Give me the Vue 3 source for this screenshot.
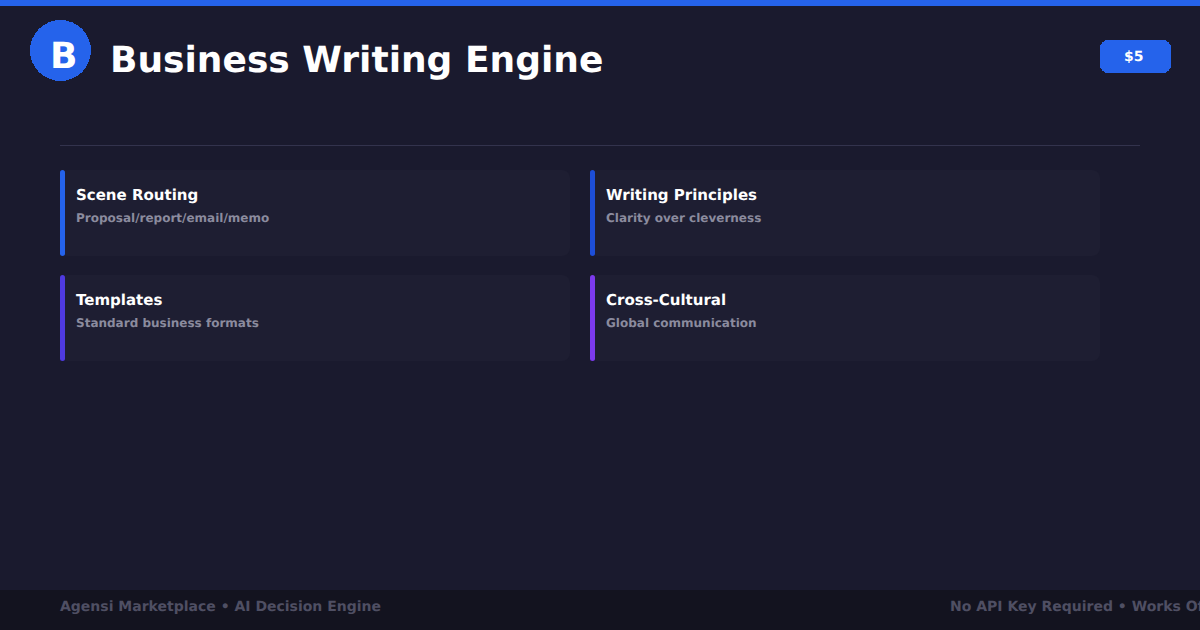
<template>
  <div class="page">
    <div class="topbar"></div>

    <header class="header">
      <svg class="logo" width="61" height="61" viewBox="0 0 61 61">
        <circle cx="30.5" cy="30.5" r="30.5" fill="#2563eb" shape-rendering="crispEdges" />
        <text x="20" y="48" class="logo-letter">B</text>
      </svg>
      <h1 class="title">Business Writing Engine</h1>
      <svg class="price" width="71" height="33" viewBox="0 0 71 33">
        <rect width="71" height="33" rx="8" fill="#2563eb" shape-rendering="crispEdges" />
        <text x="24" y="21" class="price-text">$5</text>
      </svg>
    </header>

    <div class="divider"></div>

    <section class="cards">
      <div v-for="card in cards" :key="card.title" class="card">
        <div class="accent" :style="{ background: card.color }"></div>
        <div class="body">
          <div class="card-title">{{ card.title }}</div>
          <div class="card-text">{{ card.text }}</div>
        </div>
      </div>
    </section>

    <footer class="footer">
      <span>Agensi Marketplace • AI Decision Engine</span>
      <span>No API Key Required • Works Offline</span>
    </footer>
  </div>
</template>

<script setup>
const cards = [
  { title: "Scene Routing", text: "Proposal/report/email/memo", color: "#2563eb" },
  { title: "Writing Principles", text: "Clarity over cleverness", color: "#1d4ed8" },
  { title: "Templates", text: "Standard business formats", color: "#4f3ae0" },
  { title: "Cross-Cultural", text: "Global communication", color: "#7c3aed" },
];
</script>

<style>
html,
body {
  margin: 0;
  background: #1a1a2e;
}
</style>

<style scoped>
.page {
  width: 1200px;
  height: 630px;
  overflow: hidden;
  display: flex;
  flex-direction: column;
  background: #1a1a2e;
  font-family: "DejaVu Sans", sans-serif;
  font-weight: 700;
  text-rendering: geometricPrecision;
}
.topbar {
  height: 6px;
  background: #2563eb;
}
.header {
  display: flex;
  align-items: flex-start;
  height: 139px;
  padding: 14px 29px 0 30px;
  box-sizing: border-box;
}
.logo {
  flex-shrink: 0;
}
.logo-letter {
  font-size: 36px;
  fill: #fff;
}
.title {
  margin: 15px 0 0 19px;
  font-size: 36px;
  line-height: 52px;
  color: #fff;
}
.price {
  margin: 20px 0 0 auto;
  flex-shrink: 0;
}
.price-text {
  font-size: 14px;
  fill: #fff;
}
.divider {
  height: 1px;
  margin: 0 60px;
  background: #33334d;
}
.cards {
  display: grid;
  grid-template-columns: 510px 510px;
  grid-auto-rows: 86px;
  column-gap: 20px;
  row-gap: 19px;
  margin: 24px 0 0 60px;
}
.card {
  display: flex;
  border-radius: 8px;
  background: #1e1e32;
}
.accent {
  width: 5px;
  border-radius: 3px;
}
.body {
  padding: 16px 11px;
}
.card-title {
  font-size: 15px;
  line-height: 18px;
  color: #fff;
}
.card-text {
  margin-top: 7px;
  font-size: 12px;
  line-height: 14px;
  color: #8b8b9e;
}
.footer {
  margin-top: auto;
  height: 40px;
  box-sizing: border-box;
  padding: 0 60px;
  display: flex;
  justify-content: space-between;
  background: #13131f;
  color: #4f4f63;
  font-size: 14px;
  line-height: 35px;
  white-space: nowrap;
}
.footer span:last-child {
  margin-left: 569px;
  flex-shrink: 0;
}
</style>
